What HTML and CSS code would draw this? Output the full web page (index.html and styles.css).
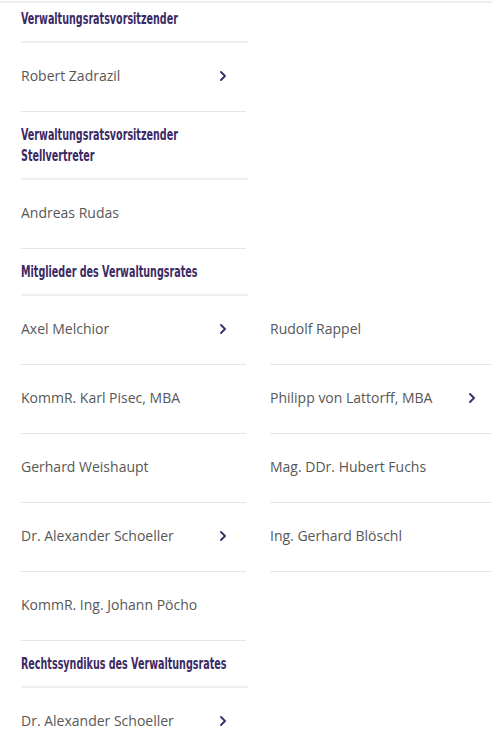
FILE: index.html
```html
<!DOCTYPE html>
<html lang="de">
<head>
<meta charset="utf-8">
<link rel="stylesheet" href="styles.css">
</head>
<body>
<div class="page">
  <section class="group">
    <h3 class="group-title"><span>Verwaltungsratsvorsitzender</span></h3>
    <div class="grid">
      <a class="person"><span>Robert Zadrazil</span><svg class="chev" viewBox="0 0 6 10"><path d="M1 1l4 4-4 4"/></svg></a>
    </div>
  </section>
  <section class="group">
    <h3 class="group-title"><span>Verwaltungsratsvorsitzender<br>Stellvertreter</span></h3>
    <div class="grid">
      <div class="person"><span>Andreas Rudas</span></div>
    </div>
  </section>
  <section class="group">
    <h3 class="group-title"><span>Mitglieder des Verwaltungsrates</span></h3>
    <div class="grid">
      <a class="person"><span>Axel Melchior</span><svg class="chev" viewBox="0 0 6 10"><path d="M1 1l4 4-4 4"/></svg></a>
      <div class="person"><span>Rudolf Rappel</span></div>
      <div class="person"><span>KommR. Karl Pisec, MBA</span></div>
      <a class="person"><span>Philipp von Lattorff, MBA</span><svg class="chev" viewBox="0 0 6 10"><path d="M1 1l4 4-4 4"/></svg></a>
      <div class="person"><span>Gerhard Weishaupt</span></div>
      <div class="person"><span>Mag. DDr. Hubert Fuchs</span></div>
      <a class="person"><span>Dr. Alexander Schoeller</span><svg class="chev" viewBox="0 0 6 10"><path d="M1 1l4 4-4 4"/></svg></a>
      <div class="person"><span>Ing. Gerhard Blöschl</span></div>
      <div class="person"><span>KommR. Ing. Johann Pöcho</span></div>
    </div>
  </section>
  <section class="group">
    <h3 class="group-title"><span>Rechtssyndikus des Verwaltungsrates</span></h3>
    <div class="grid">
      <a class="person"><span>Dr. Alexander Schoeller</span><svg class="chev" viewBox="0 0 6 10"><path d="M1 1l4 4-4 4"/></svg></a>
    </div>
  </section>
</div>
</body>
</html>
```
FILE: styles.css
```css
html, body {
  margin: 0;
  padding: 0;
  background: #ffffff;
}
body {
  overflow: hidden;
  height: 747px;
  border-top: 2px solid #eeeeee;
  margin-top: 1px;
}
.page {
  padding-left: 21px;
  width: 471px;
  overflow: hidden;
}
.group-title {
  margin: 0;
  width: 227px;
  padding: 12px 0 12px;
  font-family: "DejaVu Sans Condensed", "DejaVu Sans", sans-serif;
  font-stretch: condensed;
  font-weight: 700;
  font-size: 16px;
  line-height: 21px;
  color: #3b2a63;
  border-bottom: 2px solid #efefef;
}
.group-title span {
  display: inline-block;
  white-space: nowrap;
  transform: scaleX(0.665);
  transform-origin: 0 50%;
}
.group:first-child .group-title {
  padding-top: 5px;
}
.grid {
  display: grid;
  grid-template-columns: 225px 225px;
  column-gap: 24px;
}
.person {
  display: flex;
  align-items: center;
  justify-content: space-between;
  padding: 23px 20px 25px 0;
  font-family: "Open Sans", sans-serif;
  font-size: 14px;
  line-height: 20px;
  color: #575757;
  border-bottom: 1px solid #e4e4ea;
  text-decoration: none;
}
.group:last-child .person {
  border-bottom: none;
}
.chev {
  width: 6px;
  height: 10px;
  flex: none;
  fill: none;
  stroke: #3b2a63;
  stroke-width: 1.8;
  stroke-linecap: round;
  stroke-linejoin: round;
}
```
